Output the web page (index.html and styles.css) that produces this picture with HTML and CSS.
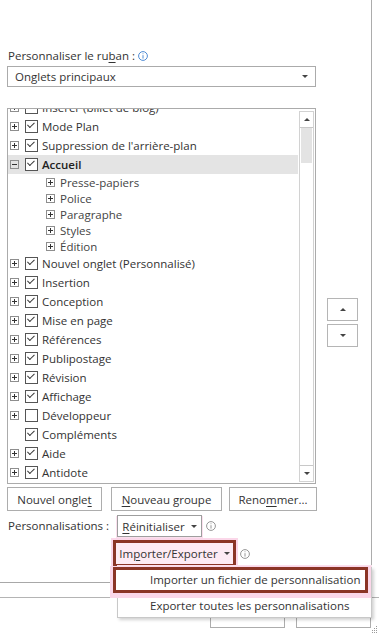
FILE: index.html
```html
<!DOCTYPE html>
<html lang="fr">
<head>
  <meta charset="UTF-8">
  <meta name="viewport" content="width=device-width, initial-scale=1.0">
  <title>Personnaliser le ruban</title>
  <link rel="stylesheet" href="styles.css">
</head>
<body>
  <div class="window">
    <div class="panel">
      <div class="field-label">
        <span>Personnaliser le ru<u>b</u>an :</span>
        <svg class="info blue" width="10" height="10" viewBox="0 0 10 10"><circle cx="5" cy="5" r="4.4"/><line x1="5" y1="4.2" x2="5" y2="7.6"/><line x1="5" y1="2.4" x2="5" y2="3.2"/></svg>
      </div>

      <div class="select">
        <span>Onglets principaux</span>
        <span class="tri"></span>
      </div>

      <div class="list-row">
        <div class="tree">
          <div class="tree-view">
            <div class="tree-items">
              <div class="row"><span class="exp"></span><span class="chk on"></span><span class="txt">Insérer (billet de blog)</span></div>
              <div class="row"><span class="exp"></span><span class="chk on"></span><span class="txt">Mode Plan</span></div>
              <div class="row"><span class="exp"></span><span class="chk on"></span><span class="txt">Suppression de l'arrière-plan</span></div>
              <div class="row selected"><span class="exp minus"></span><span class="chk on"></span><span class="txt">Accueil</span></div>
              <div class="sub"><span class="exp"></span><span class="txt">Presse-papiers</span></div>
              <div class="sub"><span class="exp"></span><span class="txt">Police</span></div>
              <div class="sub"><span class="exp"></span><span class="txt">Paragraphe</span></div>
              <div class="sub"><span class="exp"></span><span class="txt">Styles</span></div>
              <div class="sub"><span class="exp"></span><span class="txt">Édition</span></div>
              <div class="row"><span class="exp"></span><span class="chk on"></span><span class="txt">Nouvel onglet (Personnalisé)</span></div>
              <div class="row"><span class="exp"></span><span class="chk on"></span><span class="txt">Insertion</span></div>
              <div class="row"><span class="exp"></span><span class="chk on"></span><span class="txt">Conception</span></div>
              <div class="row"><span class="exp"></span><span class="chk on"></span><span class="txt">Mise en page</span></div>
              <div class="row"><span class="exp"></span><span class="chk on"></span><span class="txt">Références</span></div>
              <div class="row"><span class="exp"></span><span class="chk on"></span><span class="txt">Publipostage</span></div>
              <div class="row"><span class="exp"></span><span class="chk on"></span><span class="txt">Révision</span></div>
              <div class="row"><span class="exp"></span><span class="chk on"></span><span class="txt">Affichage</span></div>
              <div class="row"><span class="exp"></span><span class="chk"></span><span class="txt">Développeur</span></div>
              <div class="row"><span class="exp none"></span><span class="chk on"></span><span class="txt">Compléments</span></div>
              <div class="row"><span class="exp"></span><span class="chk on"></span><span class="txt">Aide</span></div>
              <div class="row"><span class="exp"></span><span class="chk on"></span><span class="txt">Antidote</span></div>
            </div>
          </div>
          <div class="scrollbar">
            <div class="sb-btn"><span class="tri up"></span></div>
            <div class="sb-thumb"></div>
            <div class="sb-btn bottom"><span class="tri"></span></div>
          </div>
        </div>

        <div class="move-buttons">
          <div class="move-btn"><span class="tri up"></span></div>
          <div class="move-btn"><span class="tri"></span></div>
        </div>
      </div>

      <div class="button-row">
        <div class="btn new-tab"><span>Nouvel ongle<u>t</u></span></div>
        <div class="btn new-group"><span><u>N</u>ouveau groupe</span></div>
        <div class="btn rename"><span>Reno<u>m</u>mer...</span></div>
      </div>

      <div class="custom-grid">
        <div class="custom-label">Personnalisations :</div>
        <div class="custom-line">
          <div class="btn drop reset"><span><u>R</u>éinitialiser</span><span class="tri"></span></div>
          <svg class="info" width="10" height="10" viewBox="0 0 10 10"><circle cx="5" cy="5" r="4.4"/><line x1="5" y1="4.2" x2="5" y2="7.6"/><line x1="5" y1="2.4" x2="5" y2="3.2"/></svg>
        </div>
        <div></div>
        <div class="custom-line">
          <div class="btn drop import"><span>Im<u>p</u>orter/Exporter</span><span class="tri"></span></div>
          <svg class="info" width="10" height="10" viewBox="0 0 10 10"><circle cx="5" cy="5" r="4.4"/><line x1="5" y1="4.2" x2="5" y2="7.6"/><line x1="5" y1="2.4" x2="5" y2="3.2"/></svg>
        </div>
      </div>
    </div>

    <!-- OK / Annuler, mostly hidden under the open menu -->
    <div class="footer">
      <div class="btn footer-btn"></div>
      <div class="btn footer-btn"></div>
    </div>

    <div class="menu">
      <div class="menu-item active">Importer un fichier de personnalisation</div>
      <div class="menu-item">Exporter toutes les personnalisations</div>
    </div>

    <svg class="grip" width="7" height="8" viewBox="0 0 7 8">
      <rect x="5" y="0" width="1" height="1"/><rect x="3" y="2" width="1" height="1"/><rect x="5" y="2" width="1" height="1"/>
      <rect x="1" y="4" width="1" height="1"/><rect x="3" y="4" width="1" height="1"/><rect x="5" y="4" width="1" height="1"/>
      <rect x="1" y="6" width="1" height="1"/><rect x="3" y="6" width="1" height="1"/><rect x="5" y="6" width="1" height="1"/>
    </svg>
  </div>
</body>
</html>
```

FILE: styles.css
```css
body {
  margin: 0;
  background: #fff;
  font-family: "Open Sans", "Noto Sans", sans-serif;
  font-size: 11px;
  color: #333;
}

u {
  text-underline-offset: 2px;
}

.window {
  position: relative;
  width: 379px;
  height: 636px;
  overflow: hidden;
}

.panel {
  box-sizing: border-box;
  width: 372px;
  height: 583px;
  padding: 48px 0 0 7px;
  border-right: 1px solid #acacac;
  border-bottom: 1px solid #a8a8a8;
}

.field-label {
  height: 16px;
  line-height: 16px;
  padding-left: 1px;
  display: flex;
  align-items: center;
  gap: 3px;
  font-size: 11.5px;
}

.info {
  fill: none;
  stroke: #8a8a8a;
  stroke-width: 0.9;
}

.info.blue {
  stroke: #3c7fcf;
}

.select {
  box-sizing: border-box;
  width: 309px;
  height: 21px;
  margin-top: 2px;
  padding: 0 7px;
  border: 1px solid #ababab;
  display: flex;
  align-items: center;
  justify-content: space-between;
  font-size: 11.5px;
}

.tri {
  display: inline-block;
  width: 0;
  height: 0;
  border-left: 3px solid transparent;
  border-right: 3px solid transparent;
  border-top: 3px solid #444;
}

.tri.up {
  border-top: 0;
  border-bottom: 3px solid #444;
}

/* tree list */
.list-row {
  display: flex;
  margin-top: 21px;
}

.tree {
  box-sizing: border-box;
  width: 309px;
  height: 376px;
  border: 1px solid #ababab;
  display: flex;
}

.tree-view {
  flex: 1;
  overflow: hidden;
}

.tree-items {
  margin-top: -11px;
}

.row {
  height: 19px;
  display: flex;
  align-items: center;
  padding-left: 2px;
}

.row.selected {
  background: #e4e4e4;
  margin-right: 1px;
}

.row.selected .txt {
  font-weight: 600;
  color: #222;
}

.sub {
  height: 16px;
  display: flex;
  align-items: center;
  padding-left: 38px;
  color: #444;
}

.sub .exp {
  margin-right: 5px;
}

.exp {
  position: relative;
  box-sizing: border-box;
  width: 9px;
  height: 9px;
  margin-right: 6px;
  border: 1px solid #8e8e8e;
  flex: none;
}

.exp::before {
  content: "";
  position: absolute;
  left: 1px;
  top: 3px;
  width: 5px;
  height: 1px;
  background: #333;
}

.exp::after {
  content: "";
  position: absolute;
  left: 3px;
  top: 1px;
  width: 1px;
  height: 5px;
  background: #333;
}

.exp.minus::after {
  display: none;
}

.exp.none {
  border: 0;
}

.exp.none::before,
.exp.none::after {
  display: none;
}

.chk {
  position: relative;
  box-sizing: border-box;
  width: 13px;
  height: 13px;
  margin-right: 4px;
  border: 1px solid #555;
  background: #fff;
  flex: none;
}

.chk.on::after {
  content: "";
  position: absolute;
  left: 2px;
  top: 1px;
  width: 6px;
  height: 3px;
  border-left: 1.3px solid #333;
  border-bottom: 1.3px solid #333;
  transform: rotate(-45deg);
  transform-origin: 50% 70%;
}

.txt {
  white-space: nowrap;
  font-size: 11.5px;
}

.scrollbar {
  box-sizing: border-box;
  width: 15px;
  margin: 2px 1px 1px 0;
  border: 1px solid #d2d2d2;
  display: flex;
  flex-direction: column;
}

.sb-btn {
  height: 15px;
  border-bottom: 1px solid #c8c8c8;
  display: flex;
  align-items: center;
  justify-content: center;
}

.sb-btn.bottom {
  margin-top: auto;
  border-bottom: 0;
  border-top: 1px solid #c8c8c8;
}

.sb-thumb {
  height: 35px;
  margin: 0 1px;
  background: #e3e3e3;
}

.move-buttons {
  margin: 190px 0 0 11px;
  display: flex;
  flex-direction: column;
  gap: 3px;
}

.move-btn {
  box-sizing: border-box;
  width: 31px;
  height: 23px;
  border: 1px solid #b5b5b5;
  display: flex;
  align-items: center;
  justify-content: center;
}

/* buttons */
.btn {
  box-sizing: border-box;
  border: 1px solid #adadad;
  background: #fff;
  display: flex;
  align-items: center;
  justify-content: center;
  font-size: 11.5px;
  white-space: nowrap;
}

.button-row {
  display: flex;
  margin-top: 3px;
  height: 24px;
}

.new-tab {
  width: 95px;
}

.new-group {
  width: 111px;
  margin-left: 9px;
}

.rename {
  width: 88px;
  margin-left: 7px;
}

.custom-grid {
  display: grid;
  grid-template-columns: 110px auto;
  row-gap: 3px;
  margin-top: 4px;
}

.custom-label {
  height: 22px;
  line-height: 22px;
  padding-left: 1px;
  font-size: 11.5px;
}

.custom-line {
  display: flex;
  align-items: center;
  gap: 4px;
}

.drop {
  gap: 6px;
}

.reset {
  width: 85px;
  height: 22px;
  border-color: #9e9e9e;
  box-shadow: 0 2px 0 1px #fbe0ee;
}

.import {
  width: 123px;
  height: 27px;
  margin-left: -4px;
  border: 3px solid #8b3526;
  background: #fdebf4;
  box-shadow: 0 0 0 2px #fbd7e9;
}

/* footer + menu */
.footer {
  margin-top: 14px;
  border-top: 1px solid #b4b4b4;
  display: flex;
  justify-content: flex-end;
  gap: 11px;
  padding: 5px 8px 0 0;
}

.footer-btn {
  width: 75px;
  height: 25px;
}

.menu {
  position: absolute;
  left: 117px;
  top: 567px;
  box-sizing: border-box;
  width: 255px;
  height: 51px;
  background: #fff;
  border: 1px solid #c8c8c8;
  box-shadow: 0 -2px 0 0 #fbe0ee, 2px 2px 3px rgba(0, 0, 0, 0.18);
}

.menu-item {
  height: 20px;
  line-height: 20px;
  padding-left: 32px;
  font-size: 11.5px;
  color: #333;
}

.menu-item.active {
  box-sizing: border-box;
  height: 26px;
  line-height: 20px;
  width: 255px;
  margin: -1px 0 3px -5px;
  padding-left: 34px;
  border: 3px solid #8b3526;
  box-shadow: 0 2px 0 3px #fbd7e9;
  background: #fff;
}

.grip {
  position: absolute;
  right: 1px;
  bottom: 2px;
  fill: #9a9a9a;
}
```
